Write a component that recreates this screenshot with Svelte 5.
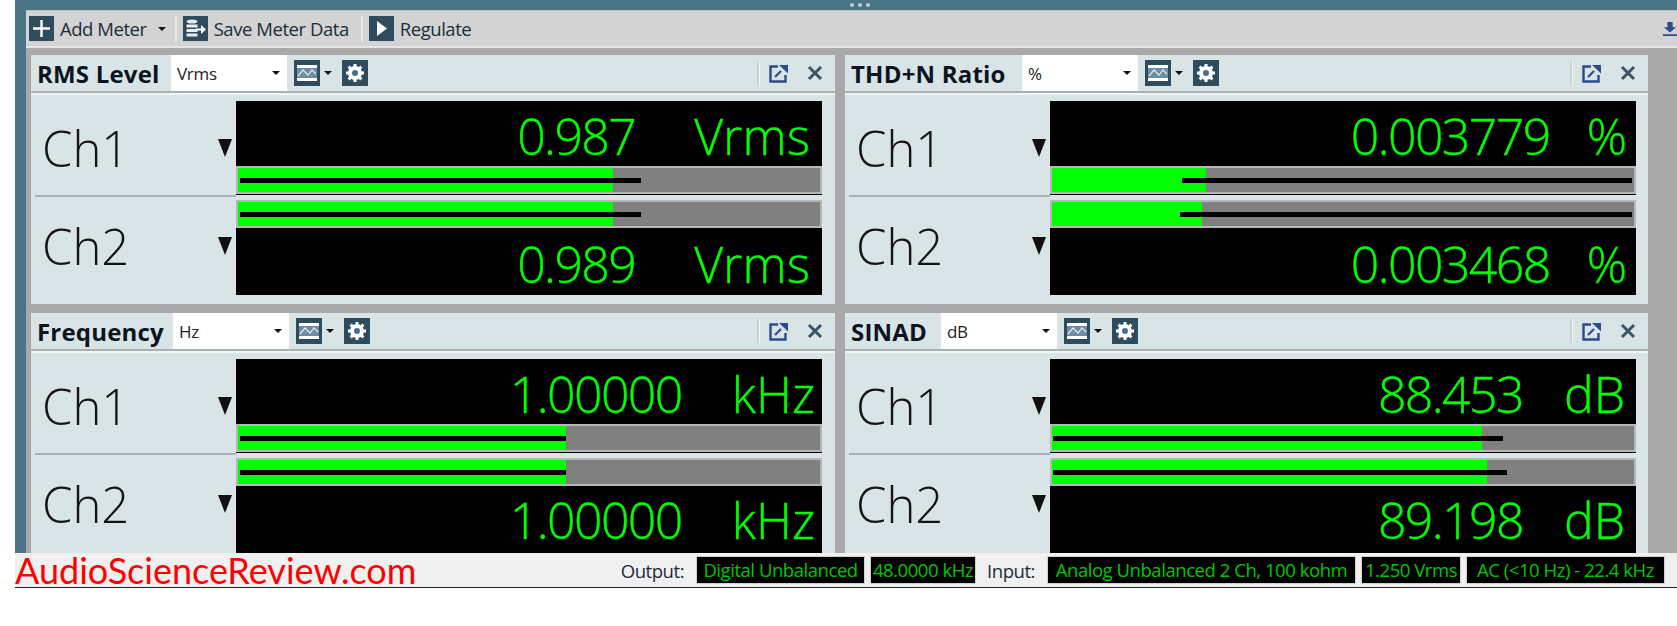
<script>
  // gap = space between the reading and its unit, pad = space right of the unit
  const panels = [
    {
      title: 'RMS Level', unit: 'Vrms', titleWidth: 134, gap: 59, pad: 12,
      channels: [
        { name: 'Ch1', value: '0.987', fill: 64.4, peakFrom: 0.3, peakTo: 69.3 },
        { name: 'Ch2', value: '0.989', fill: 64.4, peakFrom: 0.3, peakTo: 69.3 },
      ],
    },
    {
      title: 'THD+N Ratio', unit: '%', titleWidth: 171, gap: 37, pad: 9,
      channels: [
        { name: 'Ch1', value: '0.003779', fill: 26.5, peakFrom: 22.4, peakTo: 99.6 },
        { name: 'Ch2', value: '0.003468', fill: 25.7, peakFrom: 22, peakTo: 99.6 },
      ],
    },
    {
      title: 'Frequency', unit: 'Hz', unitLabel: 'kHz', titleWidth: 136, gap: 50, pad: 7,
      channels: [
        { name: 'Ch1', value: '1.00000', fill: 56.4, peakFrom: 0.3, peakTo: 56.4 },
        { name: 'Ch2', value: '1.00000', fill: 56.4, peakFrom: 0.3, peakTo: 56.4 },
      ],
    },
    {
      title: 'SINAD', unit: 'dB', titleWidth: 90, gap: 41, pad: 11,
      channels: [
        { name: 'Ch1', value: '88.453', fill: 73.8, peakFrom: 0.2, peakTo: 77.5 },
        { name: 'Ch2', value: '89.198', fill: 74.8, peakFrom: 0.2, peakTo: 78.1 },
      ],
    },
  ];

  const outputs = [
    { text: 'Digital Unbalanced', width: 169 },
    { text: '48.0000 kHz', width: 106 },
  ];
  const inputs = [
    { text: 'Analog Unbalanced 2 Ch, 100 kohm', width: 309 },
    { text: '1.250 Vrms', width: 100 },
    { text: 'AC (<10 Hz) - 22.4 kHz', width: 199 },
  ];
</script>

{#snippet bar(ch)}
  <div class="bar">
    <div class="fill" style="width: {ch.fill}%"></div>
    <div class="peak" style="left: {ch.peakFrom}%; width: {ch.peakTo - ch.peakFrom}%"></div>
  </div>
{/snippet}

{#snippet reading(ch, panel)}
  <div class="reading" style="padding-right: {panel.pad}px">
    <span class="num" style="margin-right: {panel.gap}px">{ch.value}</span>
    <span class="unit">{panel.unitLabel ?? panel.unit}</span>
  </div>
{/snippet}

<div class="page">
  <div class="shell">
    <div class="grip"><i></i><i></i><i></i></div>

    <div class="toolbar">
      <span class="tool-icon">
        <svg viewBox="0 0 25 25"><path d="M12.5 4v17M4 12.5h17" stroke="#fff" stroke-width="2.4" fill="none" /></svg>
      </span>
      <span class="tool-label">Add Meter</span>
      <span class="caret tool-caret"></span>
      <span class="tool-sep"></span>
      <span class="tool-icon">
        <svg viewBox="0 0 25 25">
          <ellipse cx="9" cy="5.5" rx="5.5" ry="2" fill="#e8eef0" />
          <path d="M3.5 8.5h11v3h-11zM3.5 13h11v3h-11zM3.5 17.500h11v3h-11z" fill="#e8eef0" />
          <path d="M13 12.500h5V9l5 4.500-5 4.500v-3.500h-5z" fill="#fff" />
        </svg>
      </span>
      <span class="tool-label">Save Meter Data</span>
      <span class="tool-sep"></span>
      <span class="tool-icon">
        <svg viewBox="0 0 25 25"><path d="M8 5l10 7.500L8 20z" fill="#fff" /></svg>
      </span>
      <span class="tool-label">Regulate</span>
      <svg class="dock" viewBox="0 0 16 18">
        <path d="M5 1h6v6h4l-7 6-7-6h4z" fill="#2a4c8a" />
        <path d="M0 16h16" stroke="#2a4c8a" stroke-width="2" />
      </svg>
    </div>

    <div class="body">
      <div class="grid">
        {#each panels as panel}
          <section class="panel">
            <header class="head">
              <h2 style="width: {panel.titleWidth}px">{panel.title}</h2>
              <div class="select">
                <span>{panel.unit}</span>
                <span class="caret"></span>
              </div>
              <span class="icon chart">
                <svg viewBox="0 0 26 26">
                  <rect x="3" y="5" width="20" height="3" fill="#fff" />
                  <rect x="3" y="8" width="20" height="10" fill="#6f8ea3" />
                  <path d="M4 16l5-6 5 5 4-5 4 4" stroke="#dfe8ec" stroke-width="1.200" fill="none" />
                  <rect x="3" y="18" width="20" height="3" fill="#fff" />
                </svg>
              </span>
              <span class="caret small"></span>
              <span class="icon gear">
                <svg viewBox="0 0 26 26">
                  <circle cx="13" cy="13" r="5" fill="#4a6f8c" stroke="#fff" stroke-width="4" />
                  <path d="M13 4v4M13 18v4M4 13h4M18 13h4M6.600 6.600l2.800 2.800M16.600 16.600l2.800 2.800M19.400 6.600l-2.800 2.800M9.400 16.600l-2.800 2.800" stroke="#fff" stroke-width="3" />
                </svg>
              </span>
              <span class="head-sep"></span>
              <svg class="popout" viewBox="0 0 20 19">
                <path d="M9 2.500H1.500v15h15V11" stroke="#2a4c8a" stroke-width="2.400" fill="none" />
                <path d="M6 13l6-6" stroke="#2a4c8a" stroke-width="2.200" />
                <path d="M10 1h9v8.500z" fill="#2a4c8a" />
              </svg>
              <svg class="close" viewBox="0 0 16 16">
                <path d="M2 2l12 12M14 2L2 14" stroke="#3a5568" stroke-width="3" />
              </svg>
            </header>

            <div class="rows">
              <div class="row first">
                <div class="label"><span>{panel.channels[0].name}</span><i class="tri"></i></div>
                <div class="meter">
                  {@render reading(panel.channels[0], panel)}
                  {@render bar(panel.channels[0])}
                </div>
              </div>
              <div class="row second">
                <div class="label"><span>{panel.channels[1].name}</span><i class="tri"></i></div>
                <div class="meter">
                  {@render bar(panel.channels[1])}
                  {@render reading(panel.channels[1], panel)}
                </div>
              </div>
            </div>
          </section>
        {/each}
      </div>

      <div class="scrollbar">
        <svg viewBox="0 0 12 8"><path d="M1 7l5-5 5 5" stroke="#606060" stroke-width="1.800" fill="none" /></svg>
        <svg viewBox="0 0 12 8"><path d="M1 1l5 5 5-5" stroke="#606060" stroke-width="1.800" fill="none" /></svg>
      </div>
    </div>

    <footer class="status">
      <span class="brand">AudioScienceReview.com</span>
      <div class="info">
        <span class="info-label">Output:</span>
        {#each outputs as box}
          <span class="box" style="width: {box.width}px">{box.text}</span>
        {/each}
        <span class="info-label input">Input:</span>
        {#each inputs as box}
          <span class="box" style="width: {box.width}px">{box.text}</span>
        {/each}
      </div>
    </footer>
  </div>
</div>

<style>
  :global(body) {
    margin: 0;
    background: #fff;
  }

  .page {
    width: 1677px;
    height: 626px;
    padding-left: 15px;
    box-sizing: border-box;
    overflow: hidden;
    font-family: "Open Sans", "Liberation Sans", sans-serif;
  }

  .shell {
    height: 588px;
    display: flex;
    flex-direction: column;
    background: #4a7585;
    border-bottom: 1px solid #222;
    box-sizing: border-box;
  }

  .grip {
    height: 10px;
    flex: none;
    display: flex;
    justify-content: center;
    align-items: center;
    gap: 4px;
    padding-left: 28px;
  }

  .grip i {
    width: 4px;
    height: 4px;
    border-radius: 50%;
    background: #c4d0d5;
  }

  .toolbar {
    height: 38px;
    flex: none;
    margin-left: 11px;
    padding-left: 3px;
    display: flex;
    align-items: center;
    background: #d3d3d3;
    border-top: 1px solid #b9c4c8;
    border-bottom: 2px solid #e6e6e6;
    box-sizing: border-box;
    color: #1c2c3c;
  }

  .tool-icon {
    width: 25px;
    height: 25px;
    flex: none;
    background: #2f4b5e;
  }

  .tool-icon svg,
  .icon svg {
    display: block;
    width: 100%;
    height: 100%;
  }

  .tool-label {
    font-size: 18.5px;
    letter-spacing: -0.45px;
    margin-left: 6px;
    white-space: nowrap;
  }

  .tool-caret {
    margin-left: 11px;
  }

  .tool-sep {
    width: 2px;
    height: 26px;
    margin: 0 6px 0 9px;
    background: #e8e8e8;
  }

  .tool-label + .tool-sep {
    margin-left: 12px;
  }

  .dock {
    width: 14px;
    height: 18px;
    margin-left: auto;
  }

  .caret {
    width: 0;
    height: 0;
    flex: none;
    border-left: 4px solid transparent;
    border-right: 4px solid transparent;
    border-top: 4px solid #111;
  }

  .body {
    flex: 1;
    min-height: 0;
    margin-left: 11px;
    display: flex;
    background: #a9a9a9;
    overflow: hidden;
  }

  .grid {
    width: 1634px;
    flex: none;
    padding: 7px 0 0 5px;
    box-sizing: border-box;
    display: grid;
    grid-template-columns: 804px 803px;
    grid-template-rows: 249px 1fr;
    column-gap: 10px;
    row-gap: 9px;
  }

  .panel {
    display: flex;
    flex-direction: column;
    min-height: 0;
    background: #d9e4e7;
  }

  .head {
    height: 38px;
    flex: none;
    display: flex;
    align-items: center;
    padding-left: 6px;
    box-sizing: border-box;
    border-bottom: 2px solid #a9b0b3;
    box-shadow: 0 2px 0 #f1f5f6;
  }

  h2 {
    margin: 0;
    flex: none;
    font-size: 24px;
    font-weight: 700;
    letter-spacing: 0.2px;
    color: #0c1420;
    white-space: nowrap;
  }

  .select {
    width: 116px;
    height: 36px;
    flex: none;
    display: flex;
    align-items: center;
    justify-content: space-between;
    padding: 0 7px 0 6px;
    box-sizing: border-box;
    background: #fff;
    font-size: 17px;
    letter-spacing: -0.3px;
    color: #222;
  }

  .icon {
    width: 26px;
    height: 26px;
    flex: none;
    background: #2f4b5e;
  }

  .chart {
    margin-left: 7px;
  }

  .small {
    margin-left: 4px;
  }

  .gear {
    margin-left: 10px;
  }

  .head-sep {
    width: 2px;
    height: 24px;
    margin-left: auto;
    background: #c9d0d3;
    box-shadow: 1px 0 0 #f5f8f8;
  }

  .popout {
    width: 20px;
    height: 19px;
    margin-left: 10px;
  }

  .close {
    width: 16px;
    height: 16px;
    margin: 0 12px 0 18px;
  }

  .rows {
    flex: 1;
    min-height: 0;
    display: flex;
    flex-direction: column;
    padding-top: 8px;
  }

  /* top panels leave a strip below the readings, the bottom ones run into the status bar */
  .panel:nth-child(-n + 2) .rows {
    padding-bottom: 9px;
  }

  .row {
    display: grid;
    grid-template-columns: 205px 586px;
  }

  .first {
    height: 96px;
    flex: none;
  }

  .second {
    flex: 1;
    min-height: 0;
  }

  .label {
    display: flex;
    align-items: center;
    justify-content: space-between;
    padding: 0 4px 0 11px;
    font-size: 49px;
    font-weight: 300;
    color: #141414;
  }

  .first .label {
    border-bottom: 2px solid #a9b0b3;
    margin-left: 4px;
    padding-left: 7px;
  }

  .tri {
    width: 0;
    height: 0;
    border-left: 7px solid transparent;
    border-right: 7px solid transparent;
    border-top: 18px solid #111;
  }

  .meter {
    display: flex;
    flex-direction: column;
    min-height: 0;
  }

  .first .meter {
    padding-bottom: 3px;
    box-sizing: border-box;
  }

  .second .meter {
    padding-top: 3px;
    box-sizing: border-box;
  }

  .reading {
    flex: 1;
    min-height: 0;
    display: flex;
    align-items: center;
    justify-content: flex-end;
    padding-top: 5px;
    background: #000;
    color: #00ff00;
    font-size: 50px;
    font-weight: 300;
    line-height: 1;
    -webkit-text-stroke: 0.4px #00ff00;
    white-space: nowrap;
  }

  .panel:nth-child(n + 3) .second .reading {
    padding-top: 0;
  }

  .num {
    letter-spacing: -1.6px;
  }

  .bar {
    position: relative;
    height: 28px;
    flex: none;
    box-sizing: border-box;
    background: #808080;
    border: 2px solid #b4b8b6;
    box-shadow: 0 1px 0 #000;
  }

  .fill {
    height: 100%;
    background: #00ff00;
  }

  .peak {
    position: absolute;
    top: 50%;
    height: 5px;
    margin-top: -2.500px;
    background: #000;
  }

  .scrollbar {
    flex: 1;
    margin-left: 17px;
    background: #f0f0f0;
    display: flex;
    flex-direction: column;
    justify-content: space-between;
    padding: 6px 0 8px;
    box-sizing: border-box;
  }

  .scrollbar svg {
    width: 11px;
    height: 8px;
    display: block;
    margin-left: 2px;
  }

  .status {
    height: 34px;
    flex: none;
    display: flex;
    align-items: center;
    justify-content: space-between;
    background: #f0f0f0;
    padding-right: 12px;
  }

  .brand {
    font-family: Lato, "Open Sans", sans-serif;
    font-size: 36px;
    line-height: 34px;
    color: #ff0000;
    white-space: nowrap;
  }

  .info {
    display: flex;
    align-items: center;
    gap: 5px;
    font-size: 18.5px;
    letter-spacing: -0.45px;
  }

  .info-label {
    margin-right: 7px;
    color: #1c2c3c;
  }

  .input {
    margin-left: 6px;
  }

  .box {
    height: 28px;
    line-height: 26px;
    text-align: center;
    box-sizing: border-box;
    border: 1px solid #d0d0d0;
    background: #000;
    color: #00c800;
    white-space: nowrap;
  }
</style>
